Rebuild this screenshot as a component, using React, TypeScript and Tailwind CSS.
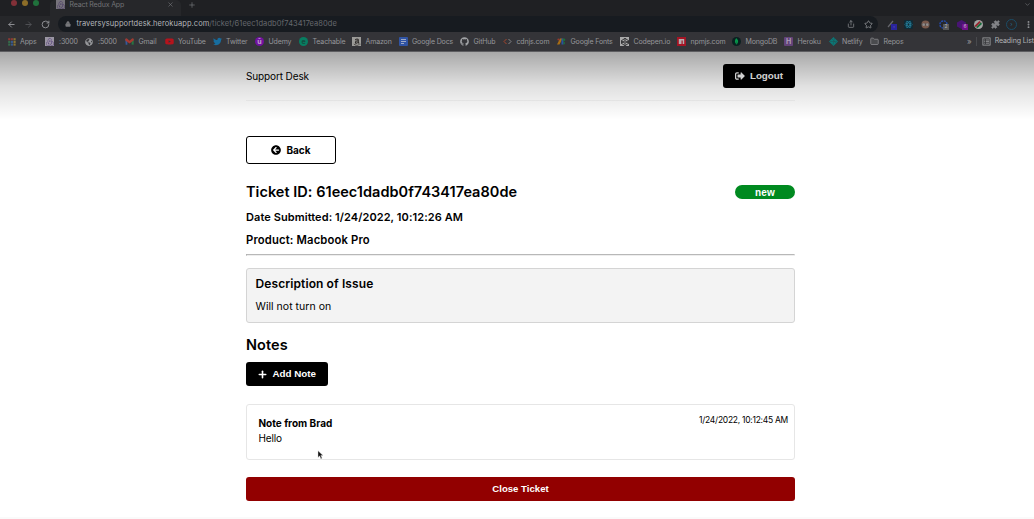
import type { ReactNode } from "react";
import { FaAmazon, FaArrowCircleLeft, FaCodepen, FaGithub, FaGlobeAmericas, FaSignOutAlt, FaTwitter, FaYoutube } from "react-icons/fa";
import { SiMongodb, SiRedux } from "react-icons/si";
import { ArrowLeft, ArrowRight, ChevronDown, EllipsisVertical, Folder, Lock, Plus, Puzzle, RotateCw, Share, Star, X } from "lucide-react";

function AppsIcon() {
  const colors = ["#8c3a35", "#8c3a35", "#8a7433", "#356c4c", "#38588c", "#8a7433", "#356c4c", "#38588c", "#8a7433"];
  return (
    <svg viewBox="0 0 9 9" className="size-[8px]">
      {colors.map((c, i) => (
        <rect key={i} x={(i % 3) * 3 + 0.2} y={Math.floor(i / 3) * 3 + 0.2} width="2.4" height="2.4" fill={c} />
      ))}
    </svg>
  );
}

function GlyphBox({ className, children }: { className: string; children: ReactNode }) {
  return <span className={`flex size-[9px] items-center justify-center text-[7px] font-bold leading-none ${className}`}>{children}</span>;
}

const bookmarks: { label: string; width: string; text: string; icon: ReactNode }[] = [
  { label: "Apps", width: "w-[37px]", text: "ml-[4px]", icon: <AppsIcon /> },
  { label: ":3000", width: "w-[40px]", text: "ml-[5px]", icon: <GlyphBox className="bg-[#9b96a3] text-[#59427d]"><SiRedux size={8} /></GlyphBox> },
  { label: ":5000", width: "w-[40px]", text: "ml-[5px]", icon: <FaGlobeAmericas size={8} className="text-[#96979a]" /> },
  { label: "Gmail", width: "w-[40px]", text: "ml-[4.5px]", icon: (
    <svg viewBox="0 0 24 20" className="h-[7px] w-[9px]">
      <path d="M0 3h6v16H1z" fill="#35599b" /><path d="M18 3h6v16h-6z" fill="#267543" /><path d="M0 2l4-1 8 7 8-7 4 1v5l-12 9L0 7z" fill="#a33830" />
    </svg>
  ) },
  { label: "YouTube", width: "w-[48px]", text: "ml-[4px]", icon: <FaYoutube size={9} className="text-[#b5131c]" /> },
  { label: "Twitter", width: "w-[42px]", text: "ml-[4px]", icon: <FaTwitter size={9} className="text-[#176d9f]" /> },
  { label: "Udemy", width: "w-[44px]", text: "ml-[4.5px]", icon: <GlyphBox className="rounded-full bg-[#7111a0] text-[#c0a5cb]">û</GlyphBox> },
  { label: "Teachable", width: "w-[53px]", text: "ml-[4.5px]", icon: <GlyphBox className="rounded-full bg-[#087d61] text-[#164c40]">e</GlyphBox> },
  { label: "Amazon", width: "w-[47px]", text: "ml-[4.5px]", icon: <GlyphBox className="bg-[#9c9b98] text-[#2c2927]"><FaAmazon size={8} /></GlyphBox> },
  { label: "Google Docs", width: "w-[61px]", text: "ml-[4px]", icon: (
    <svg viewBox="0 0 9 9" className="size-[9px]"><rect width="9" height="9" rx="1" fill="#3054a4" /><path d="M2 2.5h5M2 4.5h5M2 6.5h3" stroke="#a0aac4" strokeWidth="1" /></svg>
  ) },
  { label: "GitHub", width: "w-[43px]", text: "ml-[4.5px]", icon: <FaGithub size={9} className="text-[#a0a2a5]" /> },
  { label: "cdnjs.com", width: "w-[54px]", text: "ml-[4.5px]", icon: (
    <svg viewBox="0 0 9 9" className="size-[9px]" fill="none"><path d="M3.5 2L1 4.5 3.5 7" stroke="#a8452b" /><path d="M5.5 2L8 4.5 5.5 7" stroke="#85878a" /></svg>
  ) },
  { label: "Google Fonts", width: "w-[63px]", text: "ml-[4.5px]", icon: (
    <svg viewBox="0 0 9 9" className="size-[9px]"><path d="M3 1.5h2.5L2.5 7.5H0z" fill="#a86e14" /><path d="M4.5 1.5h2v6h-2z" fill="#2851a0" /><path d="M6.5 4.5a1.5 1.5 0 010 3z" fill="#1d7139" /><circle cx="7" cy="2.8" r="1.3" fill="#1d7139" /><circle cx="1.5" cy="2.5" r="1.1" fill="#98382c" /></svg>
  ) },
  { label: "Codepen.io", width: "w-[57px]", text: "ml-[4.5px]", icon: <GlyphBox className="bg-[#aaaaab] text-[#242426]"><FaCodepen size={8} /></GlyphBox> },
  { label: "npmjs.com", width: "w-[55px]", text: "ml-[4.5px]", icon: (
    <svg viewBox="0 0 9 9" className="size-[9px]"><rect width="9" height="9" fill="#a41525" /><path d="M1.8 2h5.4v5H5.7V3.5H4.5V7H1.8z" fill="#b5aeb0" /></svg>
  ) },
  { label: "MongoDB", width: "w-[52px]", text: "ml-[4.5px]", icon: <GlyphBox className="rounded-full bg-[#0a2020] text-[#07964a]"><SiMongodb size={7} /></GlyphBox> },
  { label: "Heroku", width: "w-[45px]", text: "ml-[4.5px]", icon: <GlyphBox className="rounded-[1px] bg-[#634379] text-[#ad9eb8]">H</GlyphBox> },
  { label: "Netlify", width: "w-[41px]", text: "ml-[4px]", icon: (
    <svg viewBox="0 0 9 9" className="size-[9px]"><path d="M4.5 0L9 4.5 4.5 9 0 4.5z" fill="#0b7776" /><path d="M1 4.5h7M3 2l4 4M5.5 1L4 8" stroke="#235153" strokeWidth=".5" /></svg>
  ) },
  { label: "Repos", width: "w-[96px]", text: "ml-[4.5px]", icon: <Folder size={9} fill="#4a4b4e" className="text-[#8d8e91]" /> },
];

function BrowserChrome() {
  return (
    <header className="h-[52px] overflow-hidden border-b border-[#5e5e61] bg-[#343438] font-['Inter','Liberation_Sans',sans-serif] text-[7px] text-[#96979b]">
      <div className="flex h-[16px] bg-[#1f2023]">
        <div className="flex h-[7px] w-[50px] gap-[5px] pl-[11px]">
          <span className="size-[6px] rounded-full bg-[#823038]" />
          <span className="size-[6px] rounded-full bg-[#8c6d28]" />
          <span className="size-[6px] rounded-full bg-[#20713c]" />
        </div>
        <div className="flex h-[16px] w-[131px] items-start rounded-t-[5px] bg-[#26272a] pt-[1px] pl-[6px]">
          <GlyphBox className="-mt-px bg-[#77747c] text-[#4c3c67]"><SiRedux size={8} /></GlyphBox>
          <span className="ml-[4.5px] w-[97.5px] leading-[8px] tracking-[-0.15px] text-[#727377]">React Redux App</span>
          <X size={7} className="text-[#77787c]" />
        </div>
        <Plus size={8} className="mt-[1px] ml-[7px] text-[#77787c]" />
        <ChevronDown size={7} className="mt-[1px] mr-[3px] ml-auto text-[#77787c]" />
      </div>
      <div className="flex h-[16px] items-center bg-[#26272a]">
        <div className="flex w-[58px] items-center gap-[8px] pl-[7px]">
          <ArrowLeft size={9} strokeWidth={2.5} className="text-[#929397]" />
          <ArrowRight size={9} strokeWidth={2.5} className="text-[#515256]" />
          <RotateCw size={9} strokeWidth={2.5} className="text-[#929397]" />
        </div>
        <div className="flex h-[16px] w-[820px] items-center rounded-full bg-[#171b20] pl-[7px]">
          <Lock size={6} fill="currentColor" className="text-[#77787c]" />
          <span className="ml-[5.5px] w-[770px] text-[7.5px] leading-[10px] tracking-[0.06px] text-[#66686d]">
            <span className="text-[#b4b6ba]">traversysupportdesk.herokuapp.com</span>/ticket/61eec1dadb0f743417ea80de
          </span>
          <Share size={8} className="shrink-0" />
          <Star size={9} className="ml-[9px] shrink-0" />
        </div>
        <div className="flex flex-1 items-center pl-[9px]">
          <span className="relative mr-[9px] flex size-[8px] items-center">
            <svg viewBox="0 0 8 8" className="size-[8px]"><path d="M1 7l5-6" stroke="#66676d" strokeWidth="1.2" /></svg>
            <span className="absolute top-[4px] left-[4px] flex size-[6px] items-center justify-center bg-[#2a249b] text-[4px] text-[#7772c4]">›</span>
          </span>
          <svg viewBox="0 0 10 10" className="mr-[8px] size-[9px]"><rect width="10" height="10" rx="1" fill="#102a35" /><g fill="none" stroke="#26809c" strokeWidth=".8"><ellipse cx="5" cy="5" rx="4" ry="1.6" /><ellipse cx="5" cy="5" rx="4" ry="1.6" transform="rotate(60 5 5)" /><ellipse cx="5" cy="5" rx="4" ry="1.6" transform="rotate(120 5 5)" /></g></svg>
          <svg viewBox="0 0 10 10" className="mr-[9px] size-[9px]"><circle cx="5" cy="5" r="4.5" fill="#78594c" /><path d="M1 4h8v2H1z" fill="#4b4b4e" /><circle cx="3" cy="5.2" r="1.5" fill="#908b89" /><circle cx="7" cy="5.2" r="1.5" fill="#908b89" /></svg>
          <span className="relative mr-[9px] size-[9px]">
            <svg viewBox="0 0 9 9" className="size-[9px]"><circle cx="4.5" cy="4.5" r="3.6" fill="none" stroke="#244bae" strokeWidth="1.4" strokeDasharray="2 .8" /></svg>
            <span className="absolute top-[4px] left-[4px] flex size-[6px] items-center justify-center bg-[#555659] text-[5px] text-[#b0b0b2]">2</span>
          </span>
          <span className="relative mr-[8px] size-[9px]">
            <svg viewBox="0 0 9 9" className="size-[9px]"><path d="M4.5 0L9 2.5v4L4.5 9 0 6.5v-4z" fill="#481473" /></svg>
            <span className="absolute top-[4px] left-[5px] flex size-[6px] items-center justify-center bg-[#70108a] text-[5px] text-[#c5b5cb]">6</span>
          </span>
          <svg viewBox="0 0 10 10" className="mr-[8px] size-[9px]"><circle cx="5" cy="5" r="5" fill="#a3a5a4" /><path d="M.6 6.4L6 1l1.6 1.4L2 8z" fill="#98252f" /><path d="M2.3 8L7.8 2.6 8.8 4.5 4 9z" fill="#116c38" /></svg>
          <Puzzle size={9} fill="currentColor" className="text-[#838488]" />
          <span className="ml-[6px] flex size-[11px] shrink-0 items-center justify-center rounded-full border border-[#1b4d67] text-[6px] leading-none text-[#286c8e]">›</span>
          <EllipsisVertical size={9} strokeWidth={3} className="ml-[7px] shrink-0" />
        </div>
      </div>
      <div className="flex h-[19px] items-center pl-[8px] whitespace-nowrap">
        {bookmarks.map((b) => (
          <div key={b.label} className={`flex shrink-0 items-center leading-[10px] ${b.width}`}>
            <span className="shrink-0">{b.icon}</span>
            <span className={`text-[7px] tracking-[-0.14px] ${b.text}`}>{b.label}</span>
          </div>
        ))}
        <span className="mr-[4px] ml-[1px] -translate-y-px text-[8px]">»</span>
        <span className="h-[9px] w-px shrink-0 bg-[#48494d]" />
        <svg viewBox="0 0 9 9" className="ml-[5px] size-[9px] shrink-0" fill="none" stroke="#a2a3a6" strokeWidth=".8">
          <rect x=".9" y=".9" width="7.2" height="7.2" /><path d="M2.2 3h1M4 3h3M2.2 4.6h1M4 4.6h3M2.2 6.2h1M4 6.2h3" />
        </svg>
        <span className="ml-[4px] tracking-[-0.1px] text-[#b2b3b6]">Reading List</span>
      </div>
    </header>
  );
}

export default function App() {
  return (
    <div className="relative h-[519px] w-[1034px] overflow-hidden bg-white font-['Inter','Liberation_Sans',sans-serif] text-black">
      <BrowserChrome />
      <div className="pointer-events-none absolute inset-x-0 top-[52px] z-10 h-[68px] bg-linear-to-b from-black/34 via-black/12 via-50% to-transparent" />
      <main className="ml-[246px] w-[549px]">
        <div className="flex h-[49px] items-center justify-between border-b border-[#f4f4f4]">
          <span className="text-[10px] leading-[15px] tracking-[-0.12px]">Support Desk</span>
          <button className="flex h-[24px] w-[72px] items-center justify-center gap-[5px] rounded-[3px] bg-black font-['Liberation_Sans',sans-serif] text-[9.8px] font-bold text-white">
            <FaSignOutAlt size={10} />Logout
          </button>
        </div>
        <button className="mt-[35px] flex h-[28px] w-[90px] items-center justify-center gap-[5px] rounded-[3px] border border-black text-[10px] font-bold">
          <FaArrowCircleLeft size={10} />Back
        </button>
        <div className="mt-[17px] flex h-[22px] items-center justify-between">
          <h2 className="text-[14.5px] font-semibold leading-[22px] tracking-[0.03px]">Ticket ID: 61eec1dadb0f743417ea80de</h2>
          <span className="flex h-[14px] w-[60px] items-center justify-center rounded-[7px] bg-[#008a20] font-['Liberation_Sans',sans-serif] text-[10px] font-bold tracking-[0.2px] text-white">new</span>
        </div>
        <h3 className="mt-[6px] text-[11px] font-semibold leading-[17px] tracking-[0.08px]">Date Submitted: 1/24/2022, 10:12:26 AM</h3>
        <h3 className="mt-[6px] text-[11.25px] font-semibold leading-[17px] tracking-[0.15px]">Product: Macbook Pro</h3>
        <hr className="mt-[5px] h-[2px] border border-t-[#b8b8b8] border-r-[#eee] border-b-[#eee] border-l-[#aaa]" />
        <section className="mt-[12px] h-[55px] rounded-[3px] border border-[#d4d4d4] bg-[#f3f3f3] px-[8.5px] pt-[6px]">
          <h3 className="text-[12px] font-semibold leading-[18px] tracking-[0.1px]">Description of Issue</h3>
          <p className="mt-[6px] text-[10.5px] leading-[16px] tracking-[0.03px]">Will not turn on</p>
        </section>
        <h2 className="mt-[11px] text-[14.5px] font-semibold leading-[22px] tracking-[0.08px]">Notes</h2>
        <button className="mt-[6px] flex h-[24px] w-[82px] items-center justify-center gap-[4.5px] rounded-[3px] bg-black font-['Liberation_Sans',sans-serif] text-[9.8px] font-bold text-white">
          <Plus size={11} strokeWidth={3.5} className="-ml-px" />Add Note
        </button>
        <article className="mt-[18px] flex h-[56px] justify-between rounded-[3px] border border-[#e6e6e6] pr-[6px] pl-[11.5px]">
          <div className="pt-[11px]">
            <h4 className="text-[10px] font-bold leading-[15px]">Note from Brad</h4>
            <p className="text-[10px] leading-[15px] tracking-[-0.15px]">Hello</p>
          </div>
          <time className="pt-[8px] text-[8.5px] leading-[14px] tracking-[-0.27px]">1/24/2022, 10:12:45 AM</time>
        </article>
        <button className="mt-[17px] flex h-[24px] w-full items-center justify-center rounded-[3px] bg-[#920000] font-['Liberation_Sans',sans-serif] text-[9.6px] font-bold text-white">Close Ticket</button>
      </main>
      <div className="mt-[16px] h-[2px] bg-[#fafafa]" />
      <svg viewBox="0 0 8 12" className="absolute top-[450px] left-[317px] h-[10px] w-[7px]"><path d="M1 1v8l2-2 1.4 3.5 1.5-.7L4.4 6.5H7z" fill="#111" stroke="#ddd" strokeWidth=".5" /></svg>
    </div>
  );
}
